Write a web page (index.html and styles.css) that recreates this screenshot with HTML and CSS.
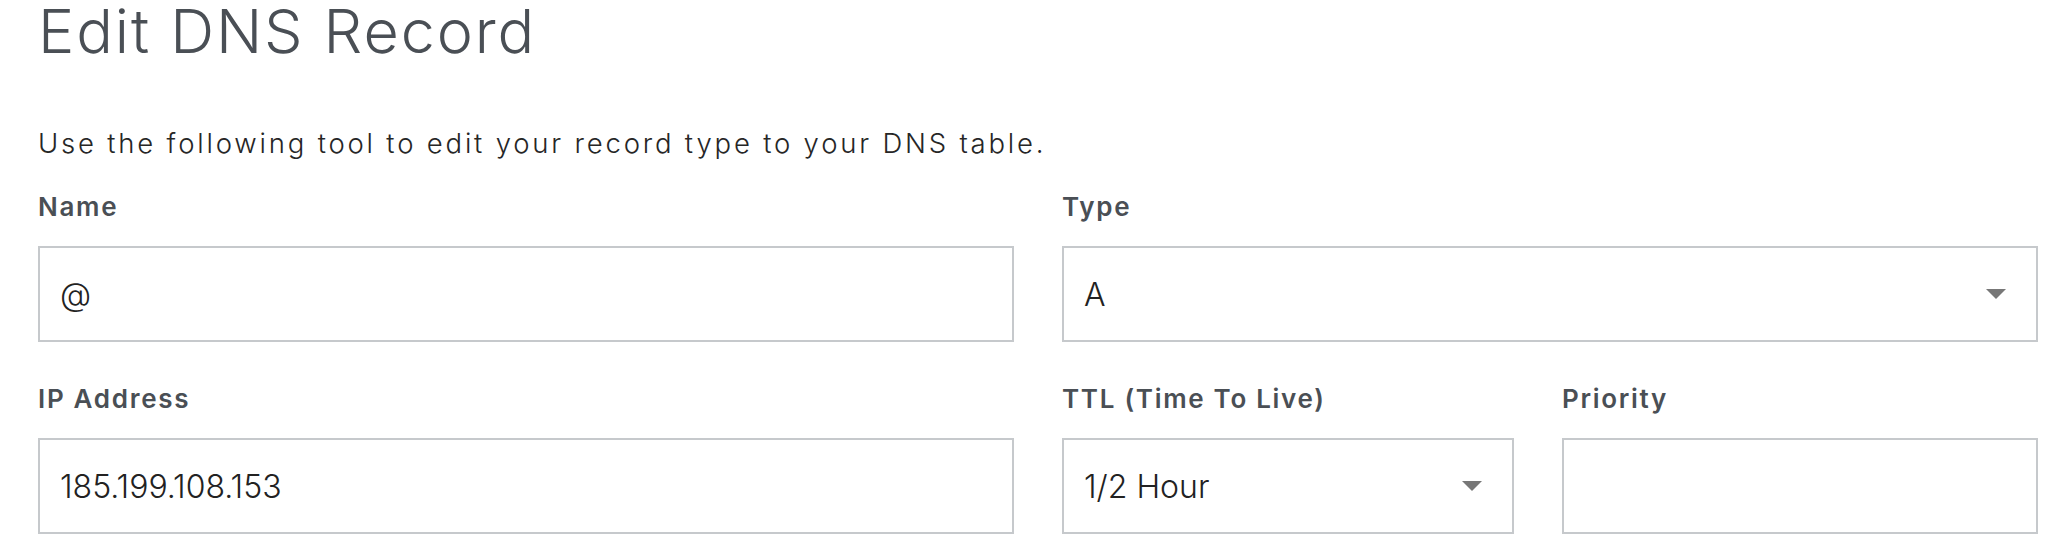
FILE: index.html
```html
<!DOCTYPE html>
<html lang="en">
<head>
<meta charset="utf-8">
<title>Edit DNS Record</title>
<link rel="stylesheet" href="styles.css">
</head>
<body>
<main class="page">
  <h1 class="title">Edit DNS Record</h1>
  <p class="intro">Use the following tool to edit your record type to your DNS table.</p>
  <form class="form">
    <div class="field field-name">
      <label class="label" for="name">Name</label>
      <input class="control" id="name" type="text" value="@">
    </div>
    <div class="field field-type">
      <label class="label" for="type">Type</label>
      <div class="select-wrap">
        <select class="control select" id="type">
          <option>A</option>
        </select>
        <svg class="arrow" width="20" height="10" viewBox="0 0 20 10"><path d="M0 0H20L10 10Z" fill="#777"/></svg>
      </div>
    </div>
    <div class="field">
      <label class="label" for="ip">IP Address</label>
      <input class="control" id="ip" type="text" value="185.199.108.153">
    </div>
    <div class="field">
      <label class="label" for="ttl">TTL (Time To Live)</label>
      <div class="select-wrap">
        <select class="control select" id="ttl">
          <option>1/2 Hour</option>
        </select>
        <svg class="arrow" width="20" height="10" viewBox="0 0 20 10"><path d="M0 0H20L10 10Z" fill="#777"/></svg>
      </div>
    </div>
    <div class="field">
      <label class="label" for="priority">Priority</label>
      <input class="control" id="priority" type="text" value="">
    </div>
  </form>
</main>
</body>
</html>
```
FILE: styles.css
```css
* { box-sizing: border-box; }
html, body { margin: 0; padding: 0; background: #fff; }
body { font-family: Inter, "Open Sans", "Liberation Sans", sans-serif; }

.page {
  width: 2038px;
  padding-left: 38px;
}

.title {
  margin: 0;
  padding-top: 1px;
  font-size: 61px;
  line-height: 60px;
  font-weight: 300;
  color: #4a4f55;
  letter-spacing: 1.9px;
}

.intro {
  margin: 64px 0 0;
  font-size: 27.5px;
  line-height: 36px;
  font-weight: 300;
  color: #262626;
  letter-spacing: 2.8px;
}

.form {
  margin-top: 31px;
  display: grid;
  grid-template-columns: 976px 452px 476px;
  column-gap: 48px;
  row-gap: 42px;
}

.field-type { grid-column: 2 / span 2; }

.field { display: flex; flex-direction: column; gap: 24px; }

.label {
  font-size: 26px;
  line-height: 30px;
  font-weight: 600;
  color: #4a4f55;
  letter-spacing: 1.7px;
}

.control {
  display: block;
  width: 100%;
  height: 96px;
  margin: 0;
  padding: 0 20px;
  border: 2px solid #c6c9cc;
  border-radius: 0;
  background: #fff;
  font-family: inherit;
  font-size: 32px;
  font-weight: 300;
  color: #222;
  outline: none;
  letter-spacing: 0;
}

.select { appearance: none; -webkit-appearance: none; }

.select-wrap { position: relative; }

.arrow {
  position: absolute;
  right: 32px;
  top: 43px;
  pointer-events: none;
}
```
